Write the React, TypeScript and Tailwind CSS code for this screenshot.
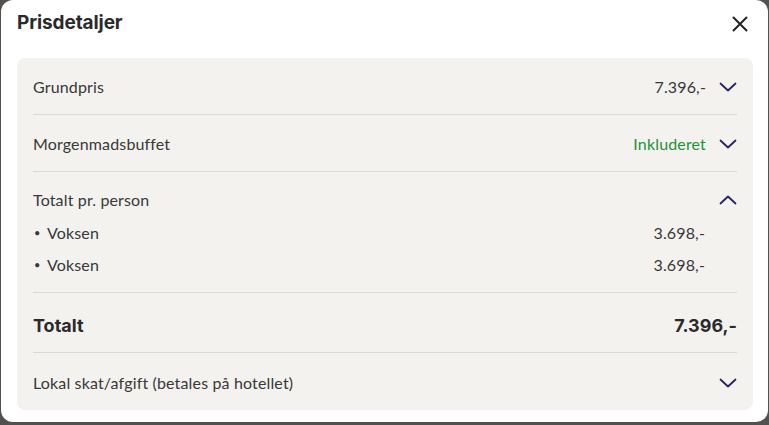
import React from "react";

const Chevron = ({ up = false }: { up?: boolean }) => (
  <svg
    width="18"
    height="10"
    viewBox="0 0 18 10"
    fill="none"
    className="shrink-0"
    style={{ transform: up ? "rotate(180deg)" : undefined }}
  >
    <path d="M1.5 1.5 9 8.5l7.5-7" stroke="#27235e" strokeWidth="1.8" strokeLinecap="round" strokeLinejoin="round" />
  </svg>
);

const CloseIcon = () => (
  <svg width="16" height="16" viewBox="0 0 16 16" fill="none">
    <path d="M1.5 1.5l13 13M14.5 1.5l-13 13" stroke="#222" strokeWidth="2" strokeLinecap="round" />
  </svg>
);

const PriceDetails = () => {
  const persons = [
    { label: "Voksen", price: "3.698,-" },
    { label: "Voksen", price: "3.698,-" },
  ];

  return (
    <div className="w-[769px] h-[425px] bg-[#55504b] overflow-hidden">
      <div className="ml-px w-[767px] h-[422px] bg-white rounded-[12px] font-['Lato',sans-serif] text-[#383838]">
        <div className="flex items-center justify-between pl-[16px] pr-[20px] h-[47px]">
          <h2 className="text-[19px] font-bold font-['Inter',sans-serif] text-[#2a2a2a] tracking-[-0.1px]">Prisdetaljer</h2>
          <button className="w-[16px] h-[16px] flex items-center justify-center">
            <CloseIcon />
          </button>
        </div>

        <div className="ml-[16px] w-[736px] mt-[11px] bg-[#f3f2ef] rounded-[8px] px-4 text-[16px] tracking-[0.15px]">
          <div className="flex items-center h-[57px] pt-[2px] border-b border-[#dbd9d5]">
            <span className="flex-1">Grundpris</span>
            <span className="mr-[13px]">7.396,-</span>
            <Chevron />
          </div>

          <div className="flex items-center h-[57px] pt-[2px] border-b border-[#dbd9d5]">
            <span className="flex-1">Morgenmadsbuffet</span>
            <span className="mr-[13px] text-[#1e9238]">Inkluderet</span>
            <Chevron />
          </div>

          <div className="pt-[18px] pb-[17px] border-b border-[#dbd9d5]">
            <div className="flex items-center h-[20px]">
              <span className="flex-1">Totalt pr. person</span>
              <Chevron up />
            </div>
            <div className="mt-[13px] flex flex-col gap-[12px]">
              {persons.map((p, i) => (
                <div key={i} className="flex items-center h-[20px] pr-[32px]">
                  <span className="w-[14px] pl-[1px] text-[11px]">•</span>
                  <span className="flex-1">{p.label}</span>
                  <span>{p.price}</span>
                </div>
              ))}
            </div>
          </div>

          <div className="flex items-center h-[60px] pt-[6px] border-b border-[#dbd9d5] text-[18px] font-bold font-['Inter',sans-serif] text-[#2a2a2a] tracking-normal">
            <span className="flex-1">Totalt</span>
            <span>7.396,-</span>
          </div>

          <div className="flex items-center h-[57px] pt-[2px]">
            <span className="flex-1">Lokal skat/afgift (betales på hotellet)</span>
            <Chevron />
          </div>
        </div>
      </div>
    </div>
  );
};

export default function App() {
  return <PriceDetails />;
}
